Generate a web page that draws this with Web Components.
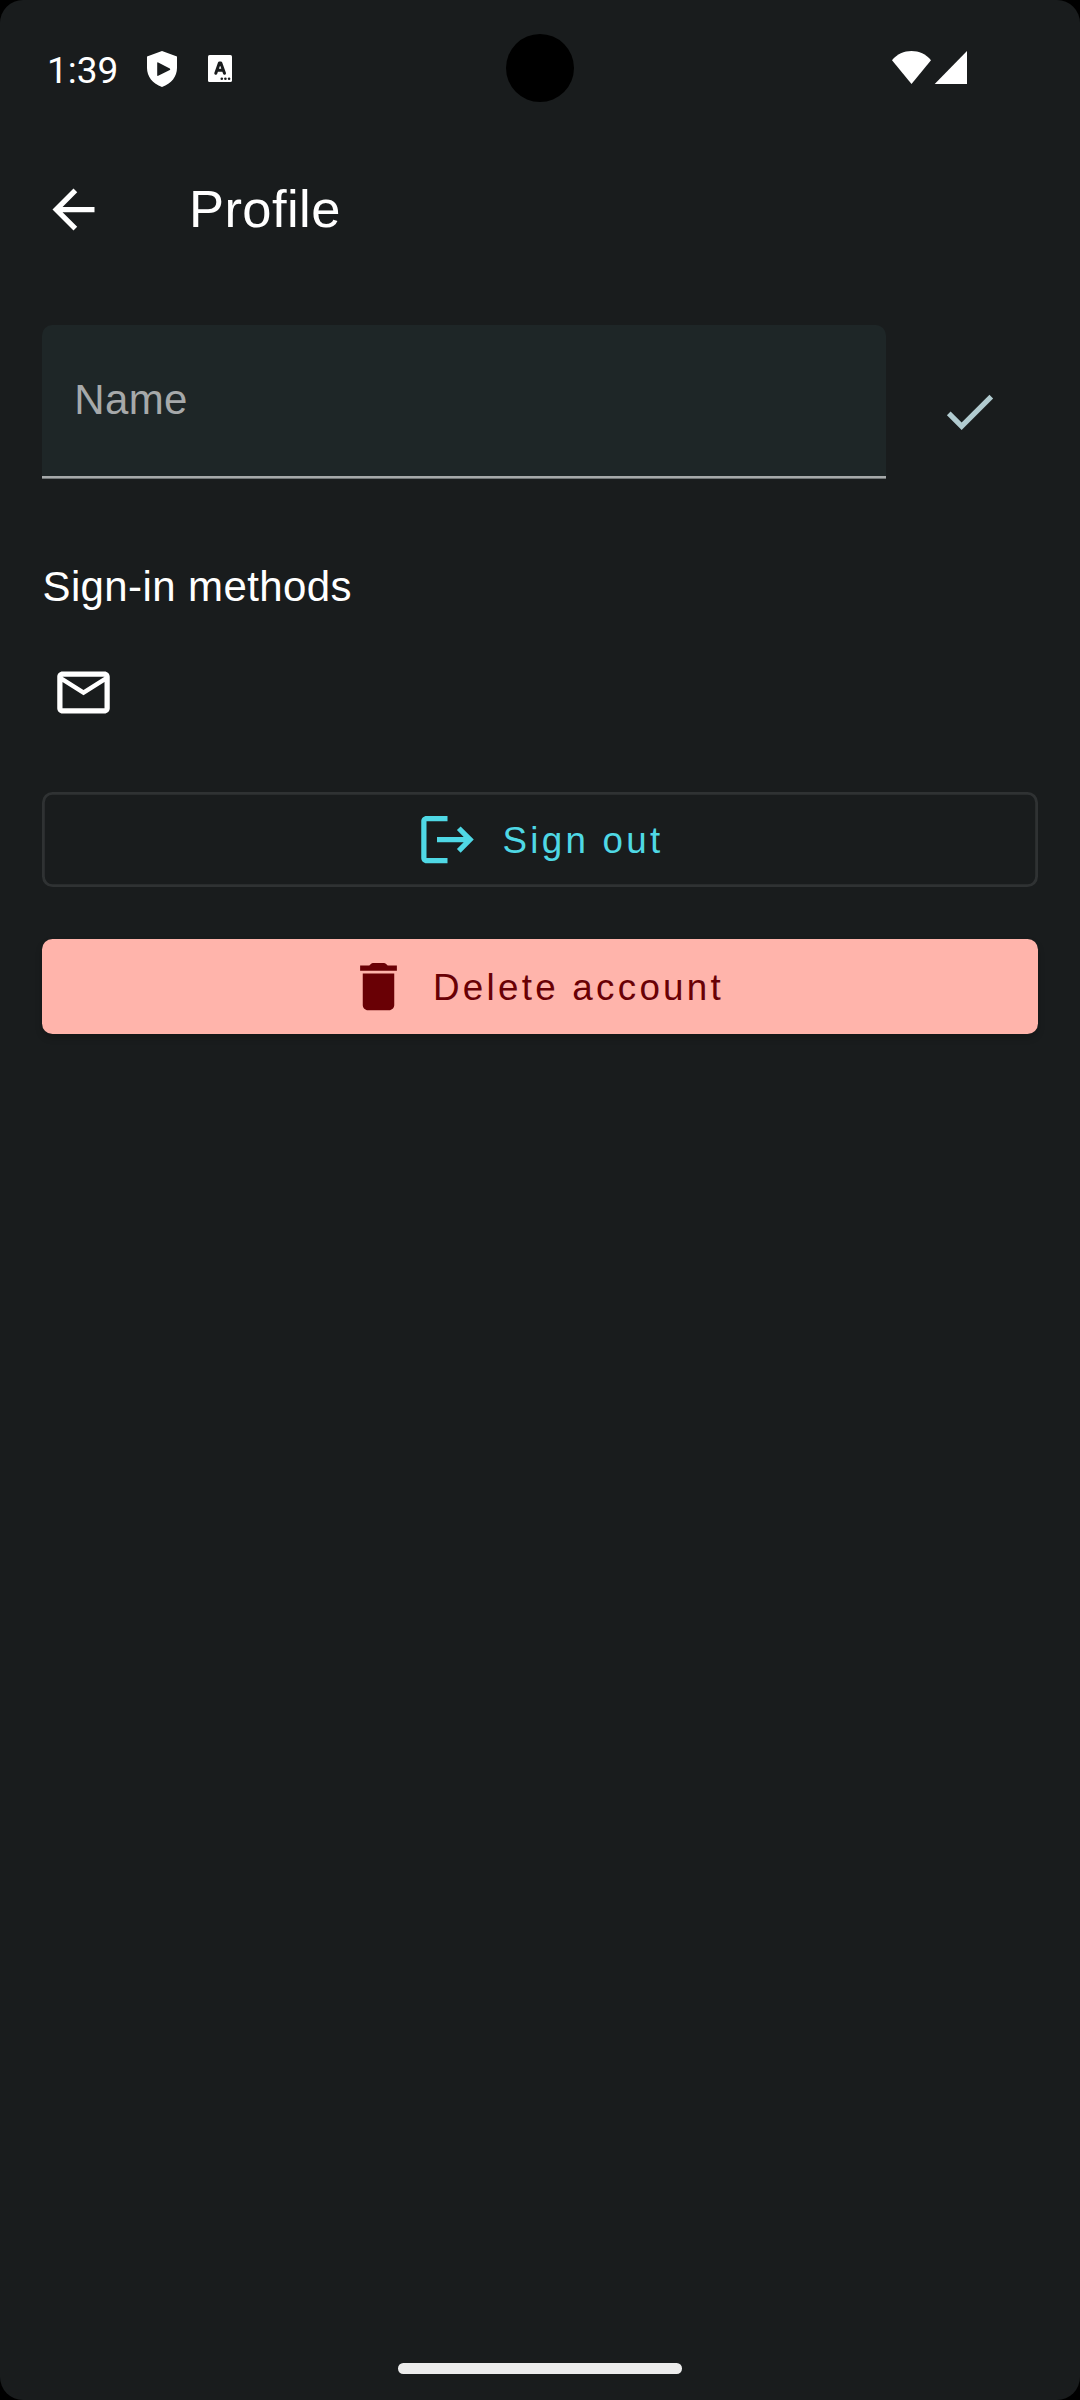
<!DOCTYPE html>
<html lang="en">
<head>
<meta charset="utf-8">
<title>Profile</title>
<style>
html,body{margin:0;background:#000}
body{width:1080px;height:2400px;overflow:hidden;font-family:"Liberation Sans",sans-serif}
</style>
</head>
<body>
<profile-screen></profile-screen>
<script>
const define = (name, html) => customElements.define(name, class extends HTMLElement {
  constructor() {
    super();
    this.attachShadow({ mode: 'open' }).innerHTML = html;
  }
});

const ICONS = {
  back: 'M20 11H7.83l5.59-5.59L12 4l-8 8 8 8 1.41-1.41L7.83 13H20v-2z',
  done: 'M9 16.2L4.8 12l-1.4 1.4L9 19 21 7l-1.4-1.4L9 16.2z',
  mail: 'M22 6c0-1.1-.9-2-2-2H4c-1.1 0-2 .9-2 2v12c0 1.1.9 2 2 2h16c1.1 0 2-.9 2-2V6zm-2 0l-8 5-8-5h16zm0 12H4V8l8 5 8-5v10z',
  logout: 'M17 7l-1.41 1.41L18.17 11H8v2h10.17l-2.58 2.58L17 17l5-5zM4 5h8V3H4c-1.1 0-2 .9-2 2v14c0 1.1.9 2 2 2h8v-2H4V5z',
  trash: 'M6 19c0 1.1.9 2 2 2h8c1.1 0 2-.9 2-2V7H6v12zM19 4h-3.5l-.7-.7c-.2-.2-.5-.3-.7-.3H9.900c-.3 0-.5.1-.7.3l-.7.7H5v2h14V4z'
};
customElements.define('md-icon', class extends HTMLElement {
  constructor() {
    super();
    this.attachShadow({ mode: 'open' });
  }
  connectedCallback() {
    this.shadowRoot.innerHTML = `
      <style>:host{display:block;flex:none;width:63px;height:63px}svg{display:block;width:63px;height:63px;fill:currentColor}</style>
      <svg viewBox="0 0 24 24"><path d="${ICONS[this.getAttribute('name')]}"/></svg>`;
  }
});

define('status-bar', `
  <style>
    :host{display:flex;position:relative;height:136px;box-sizing:border-box;padding:51px 113px 0 47px;justify-content:space-between;color:#fff}
    .side{display:flex;align-items:flex-start}
    svg{display:block;fill:currentColor}
    .clock{font:37px/43px Roboto,sans-serif;margin-top:-2px;width:100px}
    .shield{width:30px;height:36px}
    .card{width:24px;height:27px;margin:4.3px 0 0 31px}
    .camera{position:absolute;left:506px;top:34px;width:68px;height:68px;border-radius:50%;background:#000}
    .wifi{width:39px;height:33px;margin-right:3px}
    .cell{width:33px;height:33px}
  </style>
  <div class="side">
    <span class="clock">1:39</span>
    <svg class="shield" viewBox="0 0 30 36"><path fill-rule="evenodd" d="M15 0L30 5.5V17c0 8.500-5.500 15.500-15 19C5.500 32.500 0 25.500 0 17V5.500zM10.200 12v12.200q0 1 1 .6L22.800 19q1-.9 0-1.600L11.200 11.400q-1-.4-1 .6z"/></svg>
    <svg class="card" viewBox="0 0 24 27"><rect width="24" height="27" rx="1.600"/><g fill="none" stroke="#191c1d" stroke-width="3" stroke-linecap="round" stroke-linejoin="round"><path d="M7.800 18.300L11.400 8h1.400l3.700 10.300M9.500 15.300h5.500"/></g><g fill="#191c1d"><circle cx="13.800" cy="23.800" r="1.300"/><circle cx="17.400" cy="23.800" r="1.300"/><circle cx="21.100" cy="23.800" r="1.300"/></g></svg>
  </div>
  <div class="camera"></div>
  <div class="side">
    <svg class="wifi" viewBox="0 0 39 33"><path d="M0 9.200C5 3 12 0 19.500 0S34 3 39 9.200L19.500 33z"/></svg>
    <svg class="cell" viewBox="0 0 33 33"><path d="M33 0v33H.7z"/></svg>
  </div>`);

define('app-bar', `
  <style>
    :host{display:flex;align-items:center;height:147px;box-sizing:border-box;padding-left:42px;color:#fff}
    h1{margin:0 0 2px 84px;font-size:52.5px;line-height:60px;font-weight:400;letter-spacing:.42px;font-variant-ligatures:none}
  </style>
  <md-icon name="back"></md-icon><h1><slot></slot></h1>`);

define('name-field', `
  <style>
    :host{display:flex;align-items:flex-start;height:154px}
    .box{box-sizing:border-box;width:844px;height:154px;border-radius:10.500px 10.500px 0 0;padding:50.500px 32.200px 0;color:#a6a9aa;font-size:42px;line-height:48px;letter-spacing:.39px;background:linear-gradient(#a6a9aa 0 2px,#6f7475 2px) 0 100%/100% 3px no-repeat,#1e2627}
    md-icon{margin:55px 0 0 52px;color:#b1cbd0}
  </style>
  <div class="box"><slot></slot></div><md-icon name="done"></md-icon>`);

define('signin-methods', `
  <style>
    :host{display:flex;flex-direction:column;color:#fff}
    h2{margin:0 0 0 .5px;font-size:42px;line-height:48px;font-weight:400;letter-spacing:.39px}
    .list{display:flex;padding:50.500px 0 0 10px}
  </style>
  <h2><slot></slot></h2><div class="list"><md-icon name="mail"></md-icon></div>`);

define('action-button', `
  <style>
    :host{display:flex;box-sizing:border-box;height:95px;align-items:center;justify-content:center;gap:23px;border-radius:10.500px;font-size:36.750px;line-height:42px;letter-spacing:3.280px}
    :host([kind=outlined]){color:#4fd8e5;box-shadow:inset 0 0 0 2.800px #2f3233}
    :host([kind=danger]){color:#690005;background:#ffb4ab;padding-right:9px;box-shadow:0 4px 7px rgba(0,0,0,.2)}
    span{white-space:nowrap;padding-top:2px}
  </style>
  <slot name="icon"></slot><span><slot></slot></span>`);

define('nav-handle', `
  <style>:host{display:block;width:284px;height:10.500px;border-radius:5.250px;background:#ececec}</style>`);

define('profile-screen', `
  <style>
    :host{display:flex;flex-direction:column;box-sizing:border-box;width:1080px;height:2400px;background:#191c1d;border-radius:23px;overflow:hidden}
    main{display:flex;flex-direction:column;padding:42px 42px 0}
    signin-methods{margin-top:83.500px}
    .out{margin-top:68px}
    .del{margin-top:52px}
    nav-handle{margin:auto auto 26.300px}
  </style>
  <status-bar></status-bar>
  <app-bar>Profile</app-bar>
  <main>
    <name-field>Name</name-field>
    <signin-methods>Sign-in methods</signin-methods>
    <action-button class="out" kind="outlined"><md-icon slot="icon" name="logout"></md-icon>Sign out</action-button>
    <action-button class="del" kind="danger"><md-icon slot="icon" name="trash"></md-icon>Delete account</action-button>
  </main>
  <nav-handle></nav-handle>`);
</script>
</body>
</html>
